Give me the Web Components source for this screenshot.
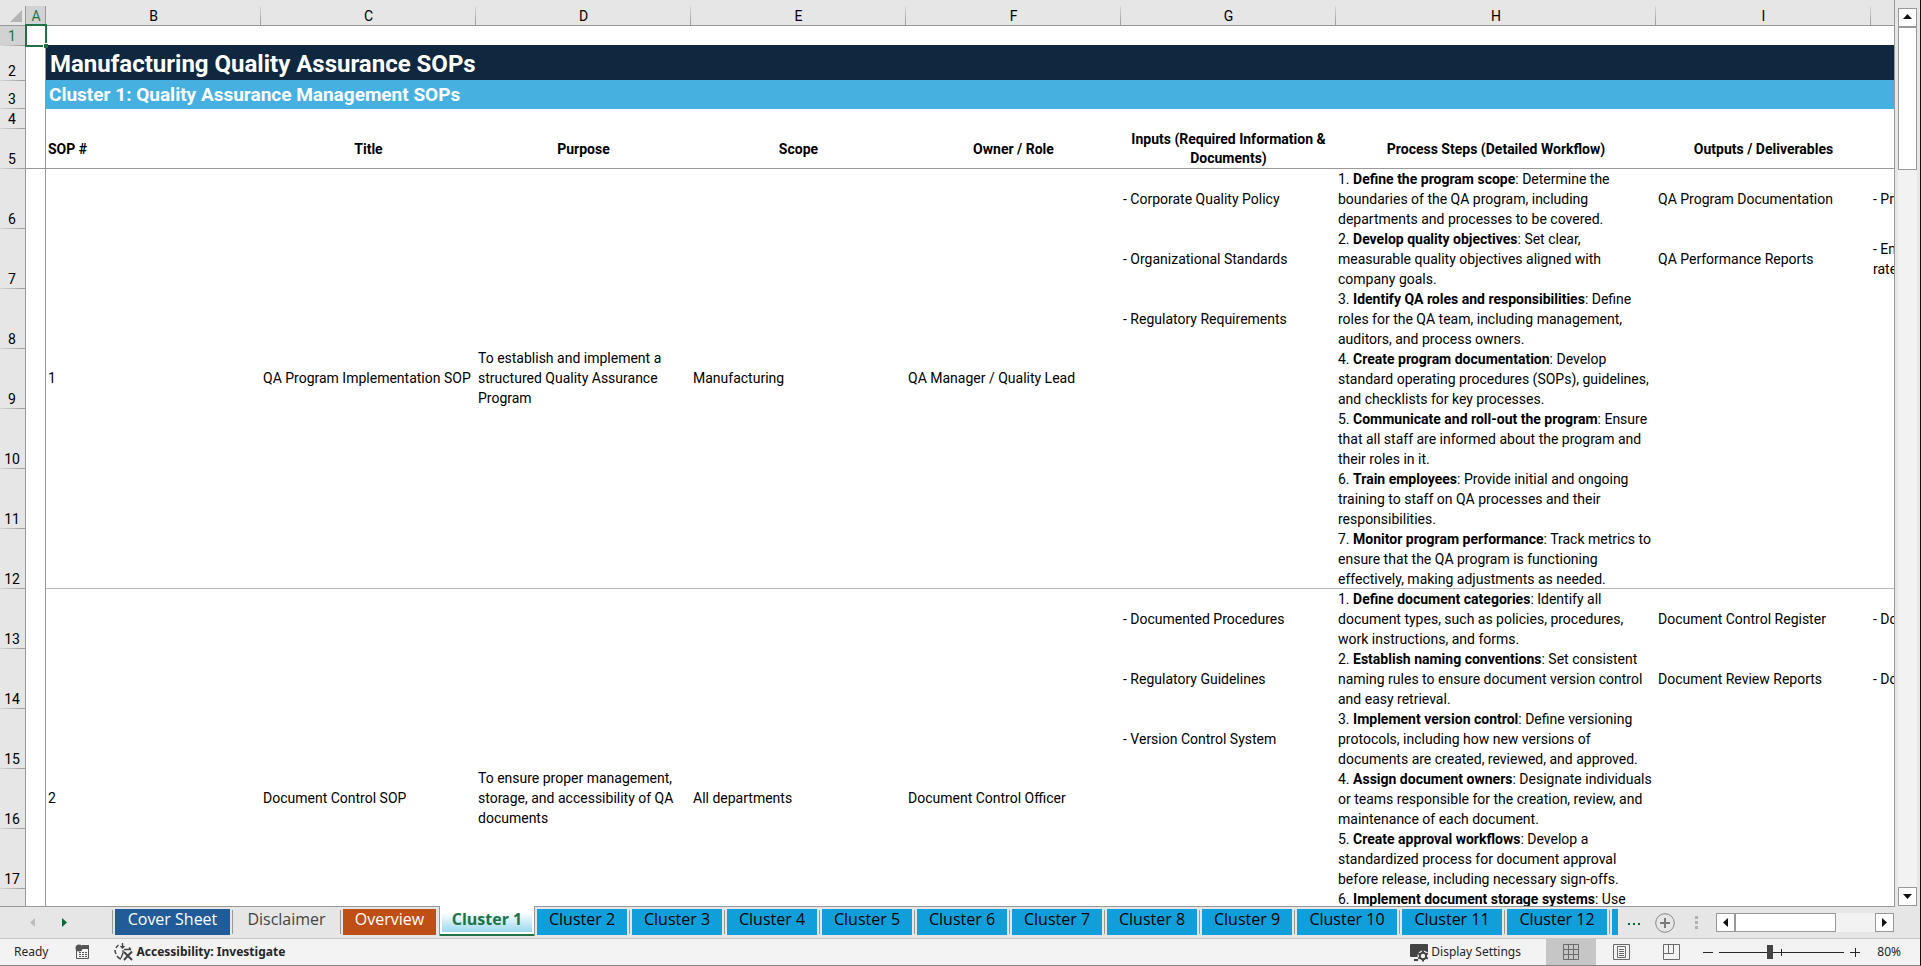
<!DOCTYPE html>
<html lang="en">
<head>
<meta charset="utf-8">
<title>Manufacturing Quality Assurance SOPs</title>
<style>
    body {
        margin: 0;
        height: 100vh;
        overflow: hidden;
        font-family: Roboto, "Liberation Sans", sans-serif;
        font-size: 14px;
        color: #000;
        background: #e6e6e6;
    }
</style>
</head>
<body>
<sheet-window>
    <sheet-grid slot="grid"></sheet-grid>
    <scroll-bar slot="scroll" direction="vertical"></scroll-bar>
    <sheet-tabs slot="tabs">
        <sheet-tab kind="navy">Cover Sheet</sheet-tab>
        <sheet-tab kind="plain">Disclaimer</sheet-tab>
        <sheet-tab kind="orange">Overview</sheet-tab>
        <sheet-tab kind="active">Cluster 1</sheet-tab>
        <sheet-tab>Cluster 2</sheet-tab>
        <sheet-tab>Cluster 3</sheet-tab>
        <sheet-tab>Cluster 4</sheet-tab>
        <sheet-tab>Cluster 5</sheet-tab>
        <sheet-tab>Cluster 6</sheet-tab>
        <sheet-tab>Cluster 7</sheet-tab>
        <sheet-tab>Cluster 8</sheet-tab>
        <sheet-tab>Cluster 9</sheet-tab>
        <sheet-tab size="wide">Cluster 10</sheet-tab>
        <sheet-tab size="wide">Cluster 11</sheet-tab>
        <sheet-tab size="wide">Cluster 12</sheet-tab>
        <sheet-tab size="cut"></sheet-tab>
        <scroll-bar slot="scroll" direction="horizontal"></scroll-bar>
    </sheet-tabs>
    <status-bar slot="status">Ready</status-bar>
</sheet-window>

<script>
class SheetWindow extends HTMLElement {
    constructor() {
        super();
        this.attachShadow({ mode: "open" });
        this.shadowRoot.innerHTML = `
        <style>
    :host {
        display: flex;
        flex-direction: column;
        box-sizing: border-box;
        height: 100vh;
        border-right: 1px solid #111;
        border-bottom: 1px solid #858585;
    }
    main {
        display: flex;
        flex: 1;
        min-height: 0;
    }
        </style>
        <main>
            <slot name="grid"></slot>
            <slot name="scroll"></slot>
        </main>
        <slot name="tabs"></slot>
        <slot name="status"></slot>
        `;
    }
}
customElements.define("sheet-window", SheetWindow);

const HEADINGS = [
    "SOP #", "Title", "Purpose", "Scope", "Owner / Role",
    "Inputs (Required Information &amp;<br>Documents)",
    "Process Steps (Detailed Workflow)", "Outputs / Deliverables", ""
];

// each step is one row: [inputs, process step, outputs, next column]
const SOPS = [
    {
        info: ["1", "QA Program Implementation SOP",
            "To establish and implement a<br>structured Quality Assurance<br>Program",
            "Manufacturing", "QA Manager / Quality Lead"],
        steps: [
            ["- Corporate Quality Policy", "1. <b>Define the program scope</b>: Determine the<br>boundaries of the QA program, including<br>departments and processes to be covered.", "QA Program Documentation", "- Pr"],
            ["- Organizational Standards", "2. <b>Develop quality objectives</b>: Set clear,<br>measurable quality objectives aligned with<br>company goals.", "QA Performance Reports", "- Em<br>rate"],
            ["- Regulatory Requirements", "3. <b>Identify QA roles and responsibilities</b>: Define<br>roles for the QA team, including management,<br>auditors, and process owners.", "", ""],
            ["", "4. <b>Create program documentation</b>: Develop<br>standard operating procedures (SOPs), guidelines,<br>and checklists for key processes.", "", ""],
            ["", "5. <b>Communicate and roll-out the program</b>: Ensure<br>that all staff are informed about the program and<br>their roles in it.", "", ""],
            ["", "6. <b>Train employees</b>: Provide initial and ongoing<br>training to staff on QA processes and their<br>responsibilities.", "", ""],
            ["", "7. <b>Monitor program performance</b>: Track metrics to<br>ensure that the QA program is functioning<br>effectively, making adjustments as needed.", "", ""]
        ]
    },
    {
        info: ["2", "Document Control SOP",
            "To ensure proper management,<br>storage, and accessibility of QA<br>documents",
            "All departments", "Document Control Officer"],
        steps: [
            ["- Documented Procedures", "1. <b>Define document categories</b>: Identify all<br>document types, such as policies, procedures,<br>work instructions, and forms.", "Document Control Register", "- Do"],
            ["- Regulatory Guidelines", "2. <b>Establish naming conventions</b>: Set consistent<br>naming rules to ensure document version control<br>and easy retrieval.", "Document Review Reports", "- Do"],
            ["- Version Control System", "3. <b>Implement version control</b>: Define versioning<br>protocols, including how new versions of<br>documents are created, reviewed, and approved.", "", ""],
            ["", "4. <b>Assign document owners</b>: Designate individuals<br>or teams responsible for the creation, review, and<br>maintenance of each document.", "", ""],
            ["", "5. <b>Create approval workflows</b>: Develop a<br>standardized process for document approval<br>before release, including necessary sign-offs.", "", ""],
            ["", "6. <b>Implement document storage systems</b>: Use", "", ""],
            ["", "", "", ""]
        ]
    }
];

class SheetGrid extends HTMLElement {
    constructor() {
        super();
        this.attachShadow({ mode: "open" });
    }

    connectedCallback() {
        const letters = "ABCDEFGHI".split("").map(l => `<th class="${l === "A" ? "on" : ""}">${l}</th>`).join("");
        const heads = HEADINGS.map(h => `<th scope="col">${h}</th>`).join("");
        let number = 6;
        let body = "";
        for (const sop of SOPS) {
            sop.steps.forEach((step, i) => {
                const last = i === sop.steps.length - 1 ? " last" : "";
                const info = i === 0 ? sop.info.map(t => `<td class="info last" rowspan="${sop.steps.length}">${t}</td>`).join("") : "";
                const cells = step.map((t, n) => `<td class="${n === 1 ? "step" : ""}${last}">${t}</td>`).join("");
                body += `<tr class="tall"><th class="num">${number++}</th><td class="a"></td>${info}${cells}</tr>`;
            });
        }

        this.shadowRoot.innerHTML = `
        <style>
    :host {
        display: block;
        position: relative;
        flex: 1;
        min-width: 0;
        overflow: hidden;
        background: #fff;
        border-right: 1px solid #999;
        border-bottom: 1px solid #999;
    }
    table {
        width: 100%;
        table-layout: fixed;
        border-collapse: separate;
        border-spacing: 0;
        line-height: 20px;
    }
    col.nums { width: 26px; }
    col.narrow { width: 20px; }
    col.mid { width: 215px; }
    col.wide { width: 320px; }
    th, td {
        box-sizing: border-box;
        padding: 0 2px;
        text-align: left;
        vertical-align: middle;
        white-space: nowrap;
    }
    thead tr { height: 26px; }
    thead th {
        padding: 8px 0 0;
        font-weight: 400;
        line-height: 17px;
        text-align: center;
        border-bottom: 1px solid #999;
        background: linear-gradient(#d8d8d8, #999) right bottom / 1px 19px no-repeat #e6e6e6;
    }
    thead th:last-child { background: #e6e6e6; }
    thead th.corner {
        vertical-align: bottom;
        background: linear-gradient(#999, #999) right bottom / 1px 19px no-repeat #e6e6e6;
    }
    thead th.on {
        color: #217346;
        background: linear-gradient(#999, #999) right bottom / 1px 19px no-repeat,
            linear-gradient(#d2d2d2, #d2d2d2) right bottom / 100% 19px no-repeat #e6e6e6;
    }
    .corner svg {
        display: block;
        margin: 0 4px 3px auto;
    }
    .num {
        padding: 0 1px 0 0;
        font-weight: 400;
        text-align: center;
        vertical-align: bottom;
        border-right: 1px solid #999;
        background: linear-gradient(90deg, #d8d8d8, #999) left bottom / 100% 1px no-repeat #e6e6e6;
    }
    .num.on {
        color: #217346;
        background-color: #d2d2d2;
    }
    .a { border-right: 1px solid #999; }
    .short { height: 20px; }
    .title { height: 35px; }
    .cluster { height: 28px; }
    .heads { height: 40px; }
    .tall { height: 60px; }
    .title td:last-child {
        padding: 2px 4px 0;
        font-size: 24px;
        font-weight: 700;
        line-height: 33px;
        color: #fff;
        background: #0f2840;
        box-shadow: 0 -1px #0f2840;
    }
    .cluster td:last-child {
        padding: 0 3px;
        font-size: 19px;
        font-weight: 700;
        line-height: 28px;
        color: #fff;
        background: #46b1e1;
        box-shadow: 0 -1px #46b1e1;
    }
    .heads th:not(.num) {
        padding-top: 1px;
        text-align: center;
        border-bottom: 1px solid #999;
    }
    .heads .a { border-bottom: 1px solid #999; }
    .heads th:nth-child(3) { text-align: left; }
    .heads th { line-height: 19px; }
    .info { padding-bottom: 2px; }
    .step { vertical-align: top; }
    .last {
        background: linear-gradient(#bbb, #bbb) left bottom / 100% 1px no-repeat;
    }
    /* selected cell A1 */
    .cursor {
        position: absolute;
        left: 25px;
        top: 24px;
        width: 18px;
        height: 19px;
        border: 2px solid #217346;
    }
    .cursor::after {
        content: "";
        position: absolute;
        right: -3px;
        bottom: -3px;
        width: 4px;
        height: 4px;
        background: #217346;
        border-top: 1px solid #fff;
        border-left: 1px solid #fff;
    }
        </style>
        <table>
            <colgroup>
                <col class="nums"><col class="narrow">
                <col class="mid" span="6"><col class="wide"><col class="mid"><col>
            </colgroup>
            <thead>
                <tr>
                    <th class="corner"><svg width="12" height="12" aria-hidden="true"><path d="M12 0v12H0z" fill="#b5b5b5"/></svg></th>
                    ${letters}<th></th>
                </tr>
            </thead>
            <tbody>
                <tr class="short"><th class="num on">1</th><td class="a"></td><td colspan="9"></td></tr>
                <tr class="title"><th class="num">2</th><td class="a"></td><td colspan="9">Manufacturing Quality Assurance SOPs</td></tr>
                <tr class="cluster"><th class="num">3</th><td class="a"></td><td colspan="9">Cluster 1: Quality Assurance Management SOPs</td></tr>
                <tr class="short"><th class="num">4</th><td class="a"></td><td colspan="9"></td></tr>
                <tr class="heads"><th class="num">5</th><td class="a"></td>${heads}</tr>
                ${body}
            </tbody>
        </table>
        <div class="cursor"></div>
        `;
    }
}
customElements.define("sheet-grid", SheetGrid);

class ScrollBar extends HTMLElement {
    constructor() {
        super();
        this.attachShadow({ mode: "open" });
        const vertical = this.getAttribute("direction") === "vertical";
        const back = vertical ? "M5 11h9L9.5 6z" : "M12 5v9L7 9.500z";
        const next = vertical ? "M5 7h9l-4.500 5z" : "M7 5v9l5-4.500z";
        this.shadowRoot.innerHTML = `
        <style>
    :host {
        display: flex;
        box-sizing: border-box;
    }
    :host([direction="vertical"]) {
        flex-direction: column;
        width: 25px;
        padding: 8px 3px 1px;
    }
    :host([direction="horizontal"]) { width: 178px; }
    button {
        display: block;
        box-sizing: border-box;
        flex: none;
        width: 19px;
        height: 19px;
        padding: 0;
        border: 1px solid #999;
        background: #fff;
    }
    svg {
        display: block;
        margin: -1px;
    }
    .track {
        flex: 1;
        background: #f2f2f2;
    }
    .thumb {
        box-sizing: border-box;
        border: 1px solid #999;
        background: #fff;
    }
    :host([direction="vertical"]) .thumb {
        width: 19px;
        height: 143px;
    }
    :host([direction="horizontal"]) .thumb {
        width: 101px;
        height: 19px;
    }
        </style>
        <button type="button" aria-label="Scroll back"><svg width="19" height="19"><path d="${back}" fill="#111"/></svg></button>
        <div class="track"><div class="thumb"></div></div>
        <button type="button" aria-label="Scroll forward"><svg width="19" height="19"><path d="${next}" fill="#111"/></svg></button>
        `;
    }
}
customElements.define("scroll-bar", ScrollBar);

class SheetTab extends HTMLElement {
    constructor() {
        super();
        this.attachShadow({ mode: "open" });
        this.shadowRoot.innerHTML = `
        <style>
    :host {
        display: block;
        box-sizing: border-box;
        flex: none;
        width: 95px;
        padding: 2px 3px 0 2px;
        --fill: #109fda;
        --ink: #000;
        background: linear-gradient(#999, #999) right 3px / 1px 24px no-repeat;
    }
    :host([size="wide"]) { width: 105px; }
    :host([size="cut"]) {
        width: 8px;
        padding-right: 0;
        background: none;
    }
    :host([kind="navy"]) {
        width: 120px;
        --fill: #215c98;
        --ink: #fff;
    }
    :host([kind="plain"]) {
        width: 108px;
        --fill: transparent;
        --ink: #444;
    }
    :host([kind="orange"]) {
        width: 98px;
        --fill: #c04f15;
        --ink: #fff;
        background: none;
    }
    :host([kind="active"]) {
        position: relative;
        width: 96px;
        height: 30px;
        margin-top: -1px;
        padding: 3px 2px 2px;
        border: 1px solid #999;
        border-width: 0 1px;
        --fill: linear-gradient(#fff, #fff 15%, #9bd8ef);
        --ink: #217346;
        background: linear-gradient(#217346, #217346) left bottom / 100% 2px no-repeat #fff;
    }
    button {
        display: block;
        width: 100%;
        height: 26px;
        padding: 0;
        border: 0;
        font: 16px/20px "Open Sans", "Noto Sans", sans-serif;
        color: var(--ink);
        background: var(--fill);
        text-align: center;
        white-space: nowrap;
        overflow: hidden;
    }
    span {
        display: block;
        height: 26px;
    }
    :host([kind="active"]) button {
        height: 23px;
        font-weight: 700;
    }
    :host([kind="active"]) span { height: 23px; }
        </style>
        <button type="button"><span><slot></slot></span></button>
        `;
        if (!this.textContent) {
            this.shadowRoot.querySelector("button").setAttribute("aria-label", "Next sheet");
        }
    }
}
customElements.define("sheet-tab", SheetTab);

class SheetTabs extends HTMLElement {
    constructor() {
        super();
        this.attachShadow({ mode: "open" });
        this.shadowRoot.innerHTML = `
        <style>
    :host {
        display: flex;
        flex: none;
        height: 31px;
        font-family: "Open Sans", "Noto Sans", sans-serif;
    }
    button {
        padding: 0;
        border: 0;
        background: none;
    }
    svg { display: block; }
    .arrows {
        display: flex;
        box-sizing: border-box;
        width: 113px;
        padding: 10px 0 0 30px;
        gap: 26px;
        align-items: flex-start;
        background: linear-gradient(#999, #999) right 3px / 1px 24px no-repeat;
    }
    .tabs {
        display: flex;
        flex: 0 1 auto;
        min-width: 0;
    }
    .right {
        display: flex;
        flex: 1;
        align-items: flex-start;
        justify-content: flex-end;
        padding: 6px 26px 0 0;
    }
    .more {
        height: 19px;
        margin-right: 15px;
    }
    .dots { margin: 3px 17px 0 20px; }
        </style>
        <div class="arrows">
            <button type="button" aria-label="Previous sheets"><svg width="6" height="11"><path d="M5 1v9L0 5.500z" fill="#bdbdbd"/></svg></button>
            <button type="button" aria-label="Next sheets"><svg width="6" height="11"><path d="M0 1v9l5-4.500z" fill="#0b6839"/></svg></button>
        </div>
        <div class="tabs"><slot></slot></div>
        <div class="right">
            <button class="more" type="button" aria-label="More sheets"><svg width="13" height="19"><path d="M1 10h2v2H1zM6 10h2v2H6zM11 10h2v2h-2z" fill="#0b6839"/></svg></button>
            <button type="button" aria-label="New sheet"><svg width="20" height="20"><circle cx="10" cy="10" r="9.300" fill="none" stroke="#858585"/><path d="M10 5v10M5 10h10" stroke="#7a7a7a" stroke-width="2"/></svg></button>
            <svg class="dots" width="4" height="14"><path d="M0 0h3v3H0zM0 5h3v3H0zM0 10h3v3H0z" fill="#b0b0b0"/></svg>
            <slot name="scroll"></slot>
        </div>
        `;
    }
}
customElements.define("sheet-tabs", SheetTabs);

class StatusBar extends HTMLElement {
    constructor() {
        super();
        this.attachShadow({ mode: "open" });
        this.shadowRoot.innerHTML = `
        <style>
    :host {
        display: flex;
        box-sizing: border-box;
        flex: none;
        height: 27px;
        padding: 0 19px 0 14px;
        align-items: center;
        border-top: 1px solid #c6c6c6;
        background: #f3f3f3;
        color: #262626;
        font: 12px/26px "Noto Sans", "Open Sans", sans-serif;
    }
    button {
        display: flex;
        align-items: center;
        height: 26px;
        padding: 0;
        border: 0;
        color: inherit;
        font: inherit;
        background: none;
        white-space: nowrap;
    }
    svg { display: block; }
    .macro { margin: 0 24px 0 27px; }
    .access {
        gap: 2px;
        font-weight: 700;
    }
    .display {
        margin-left: auto;
        gap: 2px;
    }
    .view {
        width: 50px;
        justify-content: center;
    }
    .view.on {
        margin-left: 25px;
        background: #c6c6c6;
    }
    .zoom {
        display: flex;
        align-items: center;
        gap: 6px;
        margin-left: 7px;
    }
    input {
        appearance: none;
        width: 125px;
        height: 14px;
        margin: 0;
        background:
            linear-gradient(#262626, #262626) 62px 50% / 1px 7px no-repeat,
            linear-gradient(#262626, #262626) 0 50% / 100% 1px no-repeat;
    }
    input::-webkit-slider-thumb {
        appearance: none;
        width: 6px;
        height: 14px;
        background: #444;
    }
    output {
        width: 26px;
        margin-left: 9px;
        text-align: right;
    }
        </style>
        <slot></slot>
        <button class="macro" type="button" aria-label="Record macro">
            <svg width="15" height="16"><path d="M1.500 6v8.500h12V2" fill="none" stroke="#555"/><path d="M7 1h7v4H7z" fill="#555"/><circle cx="4" cy="4" r="3.500" fill="#555"/><path d="M4 8.500h2M7 8.500h2M10 8.500h2M4 10.500h2M7 10.500h2M10 10.500h2M4 12.500h2M7 12.500h2M10 12.500h2" stroke="#555"/></svg>
        </button>
        <button class="access" type="button">
            <svg width="20" height="20" fill="none" stroke="#444"><path d="M4.500 3A8 8 0 0 0 2 6M1 8A8 8 0 0 0 2 12M3 14A8 8 0 0 0 7 17" stroke-width="1.500"/><path d="M8.500 1v5M6.500 4l2 2 2-2M10 7.500h7M15 5.500l2 2M9 8v3l-2 5" stroke-width="1.300"/><path d="M10 10l8 8M18 9.500c-3 3-5 5-8 8.500" stroke-width="2"/></svg>
            Accessibility: Investigate
        </button>
        <button class="display" type="button">
            <svg width="19" height="19"><path d="M1 1h16q1 0 1 1v7l-8 5H1q-1 0-1-1V2q0-1 1-1zM4 16h4v2H4z" fill="#444"/><circle cx="13" cy="13" r="5.500" fill="#f3f3f3"/><circle cx="13" cy="13" r="3.200" fill="none" stroke="#444" stroke-width="2"/><path d="M13 7.500v2M13 16.500v2M8.200 10.300l1.800 1M16 14.700l1.800 1M8.200 15.700l1.800-1M16 11.300l1.800-1" stroke="#444" stroke-width="2"/></svg>
            Display Settings
        </button>
        <button class="view on" type="button" aria-label="Normal view">
            <svg width="16" height="16" fill="none" stroke="#6a6a6a"><path d="M.5.5h15v15H.5zM.5 5.500h15M.5 10.500h15M5.500.5v15M10.500.5v15"/></svg>
        </button>
        <button class="view" type="button" aria-label="Page layout view">
            <svg width="17" height="16" fill="none" stroke="#6a6a6a"><path d="M.5.5h16v15H.5zM4.500 2.500h8v11h-8zM6 5.500h5M6 7.500h5M6 9.500h5M6 11.500h5"/></svg>
        </button>
        <button class="view" type="button" aria-label="Page break view">
            <svg width="17" height="16" fill="none" stroke="#6a6a6a"><path d="M.5.5h16v15H.5zM.5 9.500h10V.5M5.500.5v9"/></svg>
        </button>
        <div class="zoom">
            <button type="button" aria-label="Zoom out"><svg width="10" height="10"><path d="M0 5.500h10" stroke="#262626"/></svg></button>
            <input type="range" min="0" max="100" value="40" aria-label="Zoom">
            <button type="button" aria-label="Zoom in"><svg width="10" height="10"><path d="M0 5.500h10M5.500 1v9" stroke="#262626"/></svg></button>
            <output>80%</output>
        </div>
        `;
    }
}
customElements.define("status-bar", StatusBar);
</script>
</body>
</html>
